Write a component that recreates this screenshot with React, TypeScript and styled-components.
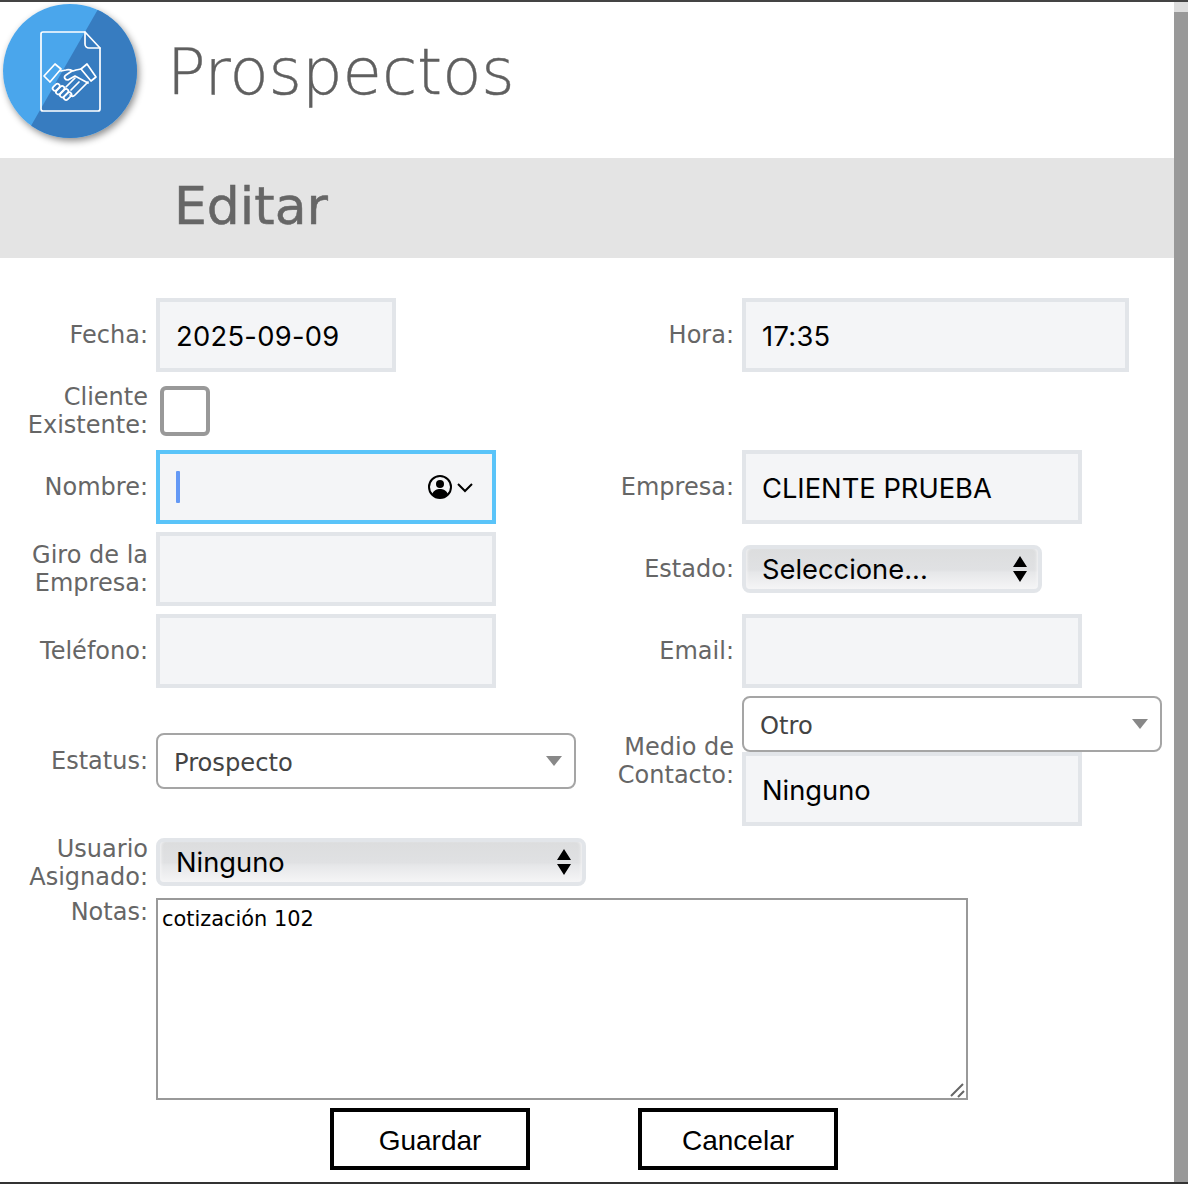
import React from "react";
import styled, { createGlobalStyle } from "styled-components";

const GlobalStyle = createGlobalStyle`
  html, body {
    margin: 0;
    height: 100%;
    overflow: hidden;
    background: #fff;
  }
  * {
    box-sizing: border-box;
  }
`;

const Page = styled.div`
  width: 1188px;
  height: 1184px;
  display: flex;
  flex-direction: column;
  overflow: hidden;
  border-top: 2px solid #444;
  border-bottom: 2px solid #333;
  font-family: "DejaVu Sans", sans-serif;
`;

const Body = styled.div`
  flex: 1;
  display: flex;
  min-height: 0;
`;

const Main = styled.main`
  flex: 1;
  min-width: 0;
`;

const Scrollbar = styled.div`
  width: 14px;
  background: #999;
  border-top: 10px solid #ddd;
`;

const Header = styled.header`
  height: 156px;
  display: flex;
  align-items: flex-start;
  padding: 2px 0 0 3px;
`;

const Logo = styled.svg`
  width: 134px;
  height: 134px;
  flex: none;
  border-radius: 50%;
  box-shadow: 2px 3px 7px rgba(0, 0, 0, 0.45);
`;

const Title = styled.h1`
  margin: 22px 0 0 30px;
  font-size: 64px;
  line-height: 92px;
  font-weight: 200;
  color: #5f5f5f;
  -webkit-text-stroke: 0.4px #5f5f5f;
`;

const Band = styled.div`
  height: 100px;
  display: flex;
  align-items: center;
  padding: 0 0 4px 174px;
  background: #e4e4e4;
  font-size: 52px;
  color: #666;
  -webkit-text-stroke: 0.5px #666;
`;

const Form = styled.form`
  display: flex;
  flex-direction: column;
  padding-top: 40px;
`;

const Row = styled.div<{ $gap: number }>`
  display: flex;
  align-items: center;
  margin-bottom: ${(p) => p.$gap}px;
`;

const LeftCell = styled.div`
  width: 586px;
  flex: none;
  display: flex;
  align-items: center;
  gap: 8px;
`;

const RightCell = styled.div`
  flex: 1;
  display: flex;
  align-items: center;
  gap: 8px;
`;

const Label = styled.label`
  width: 148px;
  flex: none;
  text-align: right;
  font-size: 24px;
  line-height: 28px;
  color: #666;
`;

const TextField = styled.input<{ $width: number }>`
  width: ${(p) => p.$width}px;
  height: 74px;
  flex: none;
  padding: 2px 0 0 16px;
  border: 4px solid #e2e5e9;
  border-radius: 0;
  outline: none;
  background: #f4f5f7;
  font-family: Inter, sans-serif;
  font-size: 27.3px;
  color: #000;
`;

const NumericField = styled(TextField)`
  letter-spacing: 0.3px;
`;

const NameField = styled.div`
  width: 340px;
  height: 74px;
  flex: none;
  display: flex;
  align-items: center;
  padding-left: 16px;
  padding-right: 18px;
  border: 4px solid #5ac4f9;
  background: #f4f5f7;
`;

const Caret = styled.span`
  width: 4px;
  height: 32px;
  border-radius: 1px;
  background: #6499f5;
`;

const ContactIcon = styled.svg`
  width: 46px;
  height: 24px;
  margin-left: auto;
`;

const Checkbox = styled.input`
  appearance: none;
  width: 50px;
  height: 50px;
  flex: none;
  margin: 0 0 0 4px;
  border: 4px solid #999;
  border-radius: 6px;
  background: #fff;
`;

const NativeSelect = styled.div<{ $width: number }>`
  width: ${(p) => p.$width}px;
  height: 48px;
  flex: none;
  display: flex;
  align-items: center;
  padding: 0 18px 0 16px;
  border: 4px solid #e2e5e9;
  border-radius: 8px;
  background: linear-gradient(#dcddde 0%, #e0e1e3 52%, #e6e7e9 58%, #f5f5f6 100%);
  box-shadow: inset 3px 0 3px -2px #f5f5f6, inset -3px 0 3px -2px #f5f5f6;
  background-clip: padding-box;
  font-family: Inter, sans-serif;
  font-size: 27.3px;
  color: #000;
`;

const AssignedSelect = styled(NativeSelect)`
  margin-top: -2px;
`;

const Stepper = styled.svg`
  width: 14px;
  height: 26px;
  margin-left: auto;
  margin-right: -7px;
`;

const Dropdown = styled.div<{ $width: number }>`
  width: ${(p) => p.$width}px;
  height: 56px;
  flex: none;
  display: flex;
  align-items: center;
  justify-content: space-between;
  padding: 4px 12px 0 16px;
  border: 2px solid #a5a5a5;
  border-radius: 8px;
  background: #fff;
  font-size: 24.2px;
  color: #444;
`;

const DropArrow = styled.span`
  width: 0;
  height: 0;
  margin-top: -4px;
  border-left: 8px solid transparent;
  border-right: 8px solid transparent;
  border-top: 10px solid #888;
`;

const ContactStack = styled.div`
  display: flex;
  flex-direction: column;
`;

const NotesBox = styled.div`
  position: relative;
  width: 812px;
  height: 202px;
  flex: none;
`;

const Notes = styled.textarea`
  width: 100%;
  height: 100%;
  display: block;
  padding: 4px;
  border: 2px solid #999;
  border-radius: 0;
  outline: none;
  resize: none;
  background: #fff;
  font-family: "DejaVu Sans", sans-serif;
  font-size: 20.9px;
  line-height: 30px;
  color: #000;
`;

const ResizeGrip = styled.svg`
  position: absolute;
  right: 2px;
  bottom: 2px;
  width: 16px;
  height: 16px;
`;

const TopAlignedRow = styled(Row)`
  align-items: flex-start;
  gap: 8px;
`;

const Actions = styled.div`
  display: flex;
  gap: 108px;
  padding-left: 330px;
`;

const ActionButton = styled.button`
  width: 200px;
  height: 62px;
  padding: 4px 0 0;
  border: 4px solid #000;
  border-radius: 0;
  background: #fff;
  font-family: "Liberation Sans", sans-serif;
  font-size: 28px;
  color: #000;
`;

const HandshakeLogo = () => (
  <Logo viewBox="0 0 134 134">
    <rect width="134" height="134" fill="#4aa6ec" />
    <polygon points="98,0 134,0 134,134 21,134" fill="#377cc0" />
    <g fill="none" stroke="#fff" strokeWidth="1.7" strokeLinejoin="round" strokeLinecap="round">
      <path d="M40 28h42l15 16v61a2 2 0 0 1-2 2H40a2 2 0 0 1-2-2V30a2 2 0 0 1 2-2z" />
      <path d="M82 28v12a4 4 0 0 0 4 4h11" />
      <path d="M52 60l6 5-11 13-6-6z" />
      <path d="M84 60l9 13-5 4-10-12z" />
      <path d="M58 67l5-1c3-1 5 0 7 1l3-1 5-1" />
      <path d="M69 67l-6 4c-3 2-1 5 2 5l7-4 13 7" />
      <path d="M85 78L72 91c-2 2-4 1-5 0" />
      <path d="M76 78l-8 8M72 74l-9 9" />
      <rect x="49" y="81" width="8" height="4.5" rx="2.2" transform="rotate(-45 53 83)" />
      <rect x="52" y="84" width="10" height="4.5" rx="2.2" transform="rotate(-45 57 86)" />
      <rect x="56" y="87" width="10" height="4.5" rx="2.2" transform="rotate(-45 61 89)" />
      <rect x="60" y="90" width="9" height="4.5" rx="2.2" transform="rotate(-45 64.5 92)" />
    </g>
  </Logo>
);

const UpDown = () => (
  <Stepper viewBox="0 0 14 26">
    <path d="M7 0l7 11H0zM7 26L0 15h14z" fill="#000" />
  </Stepper>
);

const App = () => (
  <>
    <GlobalStyle />
    <Page>
      <Body>
        <Main>
          <Header>
            <HandshakeLogo />
            <Title>Prospectos</Title>
          </Header>
          <Band>Editar</Band>
          <Form>
            <Row $gap={11}>
              <LeftCell>
                <Label>Fecha:</Label>
                <NumericField $width={240} readOnly value="2025-09-09" />
              </LeftCell>
              <RightCell>
                <Label>Hora:</Label>
                <NumericField $width={387} readOnly value="17:35" />
              </RightCell>
            </Row>
            <Row $gap={11}>
              <LeftCell>
                <Label>Cliente Existente:</Label>
                <Checkbox type="checkbox" />
              </LeftCell>
            </Row>
            <Row $gap={8}>
              <LeftCell>
                <Label>Nombre:</Label>
                <NameField>
                  <Caret />
                  <ContactIcon viewBox="0 0 46 24">
                    <circle cx="12" cy="12" r="11" fill="none" stroke="#000" strokeWidth="2" />
                    <circle cx="12" cy="9" r="4" fill="#000" />
                    <path d="M4 19c2-4 5-5 8-5s6 1 8 5c-2 3-5 4-8 4s-6-1-8-4z" fill="#000" />
                    <path d="M30 9l7 7 7-7" fill="none" stroke="#000" strokeWidth="2" />
                  </ContactIcon>
                </NameField>
              </LeftCell>
              <RightCell>
                <Label>Empresa:</Label>
                <TextField $width={340} readOnly value="CLIENTE PRUEBA" />
              </RightCell>
            </Row>
            <Row $gap={8}>
              <LeftCell>
                <Label>Giro de la Empresa:</Label>
                <TextField $width={340} readOnly value="" />
              </LeftCell>
              <RightCell>
                <Label>Estado:</Label>
                <NativeSelect $width={300}>
                  Seleccione...
                  <UpDown />
                </NativeSelect>
              </RightCell>
            </Row>
            <Row $gap={8}>
              <LeftCell>
                <Label>Teléfono:</Label>
                <TextField $width={340} readOnly value="" />
              </LeftCell>
              <RightCell>
                <Label>Email:</Label>
                <TextField $width={340} readOnly value="" />
              </RightCell>
            </Row>
            <Row $gap={9}>
              <LeftCell>
                <Label>Estatus:</Label>
                <Dropdown $width={420}>
                  Prospecto
                  <DropArrow />
                </Dropdown>
              </LeftCell>
              <RightCell>
                <Label>Medio de Contacto:</Label>
                <ContactStack>
                  <Dropdown $width={420}>
                    Otro
                    <DropArrow />
                  </Dropdown>
                  <TextField $width={340} readOnly value="Ninguno" />
                </ContactStack>
              </RightCell>
            </Row>
            <Row $gap={7}>
              <LeftCell>
                <Label>Usuario Asignado:</Label>
                <AssignedSelect $width={430}>
                  Ninguno
                  <UpDown />
                </AssignedSelect>
              </LeftCell>
            </Row>
            <TopAlignedRow $gap={8}>
              <Label>Notas:</Label>
              <NotesBox>
                <Notes readOnly value="cotización 102" />
                <ResizeGrip viewBox="0 0 16 16">
                  <path d="M1 14L13 2M8 15l6-6" stroke="#666" strokeWidth="2" fill="none" />
                </ResizeGrip>
              </NotesBox>
            </TopAlignedRow>
            <Actions>
              <ActionButton type="button">Guardar</ActionButton>
              <ActionButton type="button">Cancelar</ActionButton>
            </Actions>
          </Form>
        </Main>
        <Scrollbar />
      </Body>
    </Page>
  </>
);

export default App;
